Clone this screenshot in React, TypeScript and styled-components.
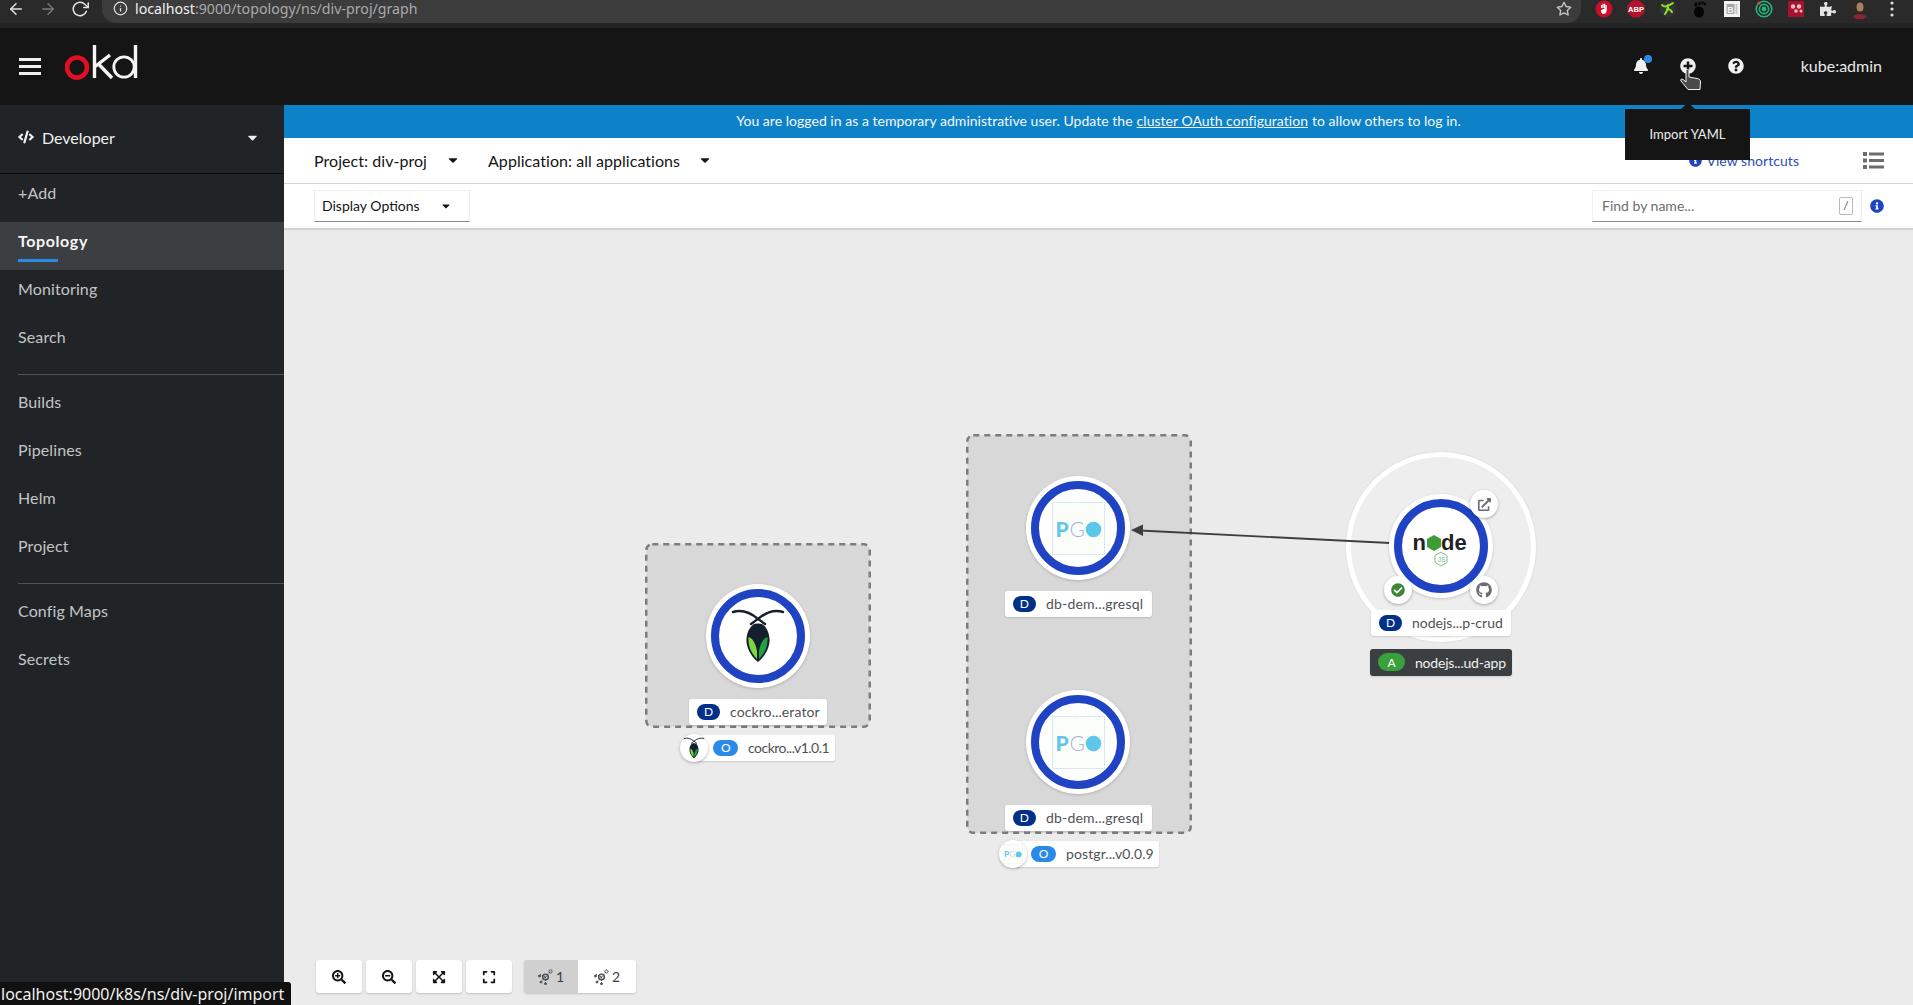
import React from "react";
import styled, { createGlobalStyle } from "styled-components";
import {
  FaBell,
  FaCaretDown,
  FaCheckCircle,
  FaCode,
  FaExpand,
  FaExpandArrowsAlt,
  FaExternalLinkAlt,
  FaGithub,
  FaInfoCircle,
  FaPlusCircle,
  FaPuzzlePiece,
  FaQuestionCircle,
  FaSearchMinus,
  FaSearchPlus,
} from "react-icons/fa";
import { FiArrowLeft, FiArrowRight, FiInfo, FiRotateCw, FiStar } from "react-icons/fi";

const GlobalStyle = createGlobalStyle`
  html, body {
    margin: 0;
    padding: 0;
    height: 100%;
    overflow: hidden;
    font-family: "Lato", "Liberation Sans", sans-serif;
    background: #151515;
  }
  * { box-sizing: border-box; }
`;

const Page = styled.div`
  position: relative;
  display: flex;
  flex-direction: column;
  width: 1913px;
  height: 1005px;
  overflow: hidden;
`;

/* browser chrome */
const BrowserBar = styled.div`
  display: flex;
  align-items: flex-start;
  height: 28px;
  flex: none;
  background: #2a2a2a;
  border-bottom: 5px solid #242424;
  color: #e8e8e8;
`;

const ChromeButton = styled.div<{ $dim?: boolean }>`
  display: flex;
  justify-content: center;
  align-items: center;
  width: 32px;
  height: 18px;
  font-size: 18px;
  color: ${(p) => (p.$dim ? "#77797b" : "#e2e2e2")};
`;

const UrlPill = styled.div`
  display: flex;
  align-items: center;
  width: 1479px;
  height: 23px;
  margin-left: 6px;
  padding: 0 9px 6px 11px;
  background: #3c3c3c;
  border-radius: 0 0 14px 14px;
  font-family: "Noto Sans", sans-serif;
  font-size: 14.2px;
  color: #a8aaab;
  svg { flex: none; }
`;

const UrlText = styled.span`
  margin-left: 7px;
  b { font-weight: 400; color: #f0f0f0; }
`;

const StarSlot = styled.span`
  display: flex;
  margin-left: auto;
  font-size: 16px;
  color: #c8c8c8;
`;

const Extensions = styled.div`
  display: flex;
  align-items: center;
  gap: 12px;
  height: 18px;
  margin-left: 13px;
`;

const Ext = styled.span`
  display: flex;
  justify-content: center;
  align-items: center;
  width: 20px;
  height: 20px;
  font-size: 16px;
  color: #e4e4e4;
`;

/* masthead */
const Masthead = styled.header`
  display: flex;
  align-items: center;
  height: 77px;
  flex: none;
  padding-left: 19px;
  background: #151515;
  color: #f0f0f0;
`;

const Hamburger = styled.div`
  display: flex;
  flex-direction: column;
  justify-content: space-between;
  width: 22px;
  height: 17px;
  span {
    height: 3px;
    background: #f0f0f0;
  }
`;

const LogoSlot = styled.div`
  display: flex;
  margin: -7px 0 0 24px;
`;

const MastActions = styled.div`
  display: flex;
  align-items: center;
  margin-left: auto;
  padding: 0 31px 2px 0;
  font-size: 16px;
`;

const MastIcon = styled.span`
  position: relative;
  display: flex;
  justify-content: center;
  width: 48px;
  font-size: 16px;
  &:first-child { margin-right: -1px; }
`;

const BellDot = styled.span`
  position: absolute;
  top: -3px;
  left: 27px;
  width: 8px;
  height: 8px;
  border-radius: 50%;
  background: #2b8ae8;
`;

const UserName = styled.span`
  margin-left: 41px;
  font-size: 16px;
  color: #e8e8e8;
`;

/* sidebar and main */
const Body = styled.div`
  display: flex;
  flex: 1;
  min-height: 0;
`;

const Sidebar = styled.nav`
  width: 284px;
  flex: none;
  background: #212427;
`;

const PerspectiveBar = styled.div`
  display: flex;
  align-items: center;
  gap: 8px;
  height: 69px;
  padding: 0 24px 4px 18px;
  border-bottom: 1px solid #0b0b0b;
  font-size: 16px;
  color: #f0f0f0;
  svg:last-child { margin-left: auto; }
`;

const NavItem = styled.div<{ $active?: boolean }>`
  position: relative;
  display: flex;
  align-items: center;
  height: 48px;
  padding: 0 0 12px 18px;
  font-size: 16px;
  letter-spacing: ${(p) => (p.$active ? "0.6px" : "0.12px")};
  font-weight: ${(p) => (p.$active ? 700 : 400)};
  color: ${(p) => (p.$active ? "#f5f5f5" : "#c2c4c6")};
  background: ${(p) => (p.$active ? "#3c3f42" : "transparent")};
`;

const NavUnderline = styled.span`
  position: absolute;
  left: 18px;
  bottom: 8px;
  width: 40px;
  height: 3px;
  background: #2b8ae8;
`;

const NavDivider = styled.div<{ $before: number; $after: number }>`
  height: 1px;
  margin: ${(p) => p.$before}px 0 ${(p) => p.$after}px 18px;
  background: #4f5255;
`;

const Main = styled.main`
  display: flex;
  flex-direction: column;
  flex: 1;
  min-width: 0;
`;

const Banner = styled.div`
  display: flex;
  justify-content: center;
  align-items: center;
  height: 33px;
  flex: none;
  padding-bottom: 2px;
  background: #0d82c8;
  font-size: 14px;
  letter-spacing: 0.03px;
  color: #f4f8fb;
  a {
    margin: 0 4px;
    color: inherit;
    text-decoration: underline;
  }
`;

const ProjectBar = styled.div`
  display: flex;
  align-items: center;
  height: 46px;
  flex: none;
  padding: 0 29px 1px 30px;
  background: #fff;
  border-bottom: 1px solid #d2d2d2;
  font-size: 16px;
  letter-spacing: 0.05px;
  color: #151515;
`;

const Picker = styled.div<{ $gap: number }>`
  display: flex;
  align-items: center;
  gap: ${(p) => p.$gap}px;
  margin-right: 28px;
  svg { font-size: 14px; }
`;

const ShortcutLink = styled.span`
  display: flex;
  align-items: center;
  gap: 4px;
  margin-left: auto;
  font-size: 14px;
  color: #2b50b4;
  svg { font-size: 13px; color: #1e44c0; }
`;

const ListToggle = styled.svg`
  margin-left: 64px;
`;

const FilterBar = styled.div`
  display: flex;
  align-items: center;
  height: 46px;
  flex: none;
  padding: 0 29px 0 30px;
  background: #fff;
  border-bottom: 2px solid #d2d2d2;
  font-size: 14px;
`;

const DisplaySelect = styled.div`
  display: flex;
  align-items: center;
  justify-content: space-between;
  width: 156px;
  height: 32px;
  padding: 0 17px 1px 7px;
  border: 1px solid #f0f0f0;
  border-bottom-color: #8a8d90;
  color: #151515;
  svg { font-size: 12px; }
`;

const FindInput = styled.div`
  display: flex;
  align-items: center;
  justify-content: space-between;
  width: 270px;
  height: 32px;
  margin-left: auto;
  padding: 0 8px 1px 9px;
  border: 1px solid #f0f0f0;
  border-bottom-color: #8a8d90;
  color: #6a6e73;
`;

const SlashKey = styled.span`
  display: flex;
  justify-content: center;
  align-items: center;
  width: 14px;
  height: 18px;
  border: 1px solid #b8bbbe;
  border-radius: 2px;
  font-size: 12px;
  color: #4f5255;
`;

const FilterInfo = styled.span`
  display: flex;
  margin-left: 8px;
  font-size: 14px;
  color: #1e44c0;
`;

/* topology canvas */
const Canvas = styled.div`
  position: relative;
  flex: 1;
  background: #ebebeb;
`;

const EdgeLayer = styled.svg`
  position: absolute;
  inset: 0;
  width: 100%;
  height: 100%;
  z-index: 2;
`;

const GroupFrame = styled.svg<{ $x: number; $y: number }>`
  position: absolute;
  left: ${(p) => p.$x}px;
  top: ${(p) => p.$y}px;
`;

const AppHalo = styled.div<{ $x: number; $y: number }>`
  position: absolute;
  left: ${(p) => p.$x - 95}px;
  top: ${(p) => p.$y - 95}px;
  width: 190px;
  height: 190px;
  background: #eeeeee;
  border: 5px solid #fff;
  border-radius: 50%;
  box-shadow: 0 0 2px rgba(0, 0, 0, 0.12);
`;

const NodeDisc = styled.div<{ $x: number; $y: number }>`
  position: absolute;
  left: ${(p) => p.$x - 52}px;
  top: ${(p) => p.$y - 52}px;
  display: flex;
  justify-content: center;
  align-items: center;
  width: 104px;
  height: 104px;
  background: #fff;
  border-radius: 50%;
  box-shadow: 0 1px 3px rgba(0, 0, 0, 0.18);
  z-index: 3;
`;

const NodeRing = styled.div`
  display: flex;
  justify-content: center;
  align-items: center;
  width: 94px;
  height: 94px;
  background: #fff;
  border: 8px solid #2043c4;
  border-radius: 50%;
`;

const Decorator = styled.span<{ $x: number; $y: number; $color?: string }>`
  position: absolute;
  left: ${(p) => p.$x - 14}px;
  top: ${(p) => p.$y - 14}px;
  display: flex;
  justify-content: center;
  align-items: center;
  width: 28px;
  height: 28px;
  background: #fff;
  border-radius: 50%;
  box-shadow: 0 1px 3px rgba(0, 0, 0, 0.3);
  font-size: 15px;
  color: ${(p) => p.$color ?? "#6a6e73"};
  z-index: 4;
`;

const Label = styled.div<{
  $x: number;
  $y: number;
  $w: number;
  $dark?: boolean;
  $pad?: number;
  $track?: number;
}>`
  position: absolute;
  left: ${(p) => p.$x}px;
  top: ${(p) => p.$y}px;
  display: flex;
  align-items: center;
  gap: 10px;
  width: ${(p) => p.$w}px;
  height: ${(p) => (p.$dark ? 27 : 26)}px;
  padding-left: ${(p) => p.$pad ?? 8}px;
  padding-bottom: 1px;
  background: ${(p) => (p.$dark ? "#3c3f42" : "#fff")};
  border-radius: 3px;
  box-shadow: 0 1px 2px rgba(0, 0, 0, 0.14);
  font-size: 14px;
  letter-spacing: ${(p) => p.$track ?? 0.1}px;
  white-space: nowrap;
  color: ${(p) => (p.$dark ? "#f0f0f0" : "#4f5255")};
  z-index: 4;
`;

const KindBadge = styled.span<{ $bg: string; $w?: number; $h?: number }>`
  display: flex;
  justify-content: center;
  align-items: center;
  width: ${(p) => p.$w ?? 23}px;
  height: ${(p) => p.$h ?? 16}px;
  flex: none;
  border-radius: 9px;
  background: ${(p) => p.$bg};
  font-size: 12px;
  color: #fff;
`;

const OperatorIcon = styled.span`
  position: absolute;
  left: -14px;
  top: -1px;
  display: flex;
  justify-content: center;
  align-items: center;
  width: 28px;
  height: 28px;
  background: #fff;
  border-radius: 50%;
  box-shadow: 0 1px 3px rgba(0, 0, 0, 0.28);
`;

const Controls = styled.div`
  position: absolute;
  left: 32px;
  bottom: 12px;
  display: flex;
  align-items: center;
  gap: 4px;
  z-index: 5;
`;

const CtrlButton = styled.div`
  display: flex;
  justify-content: center;
  align-items: center;
  width: 46px;
  height: 33px;
  background: #fff;
  border-radius: 3px;
  box-shadow: 0 1px 2px rgba(0, 0, 0, 0.18);
  font-size: 14px;
  color: #151515;
`;

const LayoutGroup = styled.div`
  display: flex;
  margin-left: 8px;
  border-radius: 3px;
  overflow: hidden;
  box-shadow: 0 1px 2px rgba(0, 0, 0, 0.18);
`;

const LayoutButton = styled.div<{ $on?: boolean }>`
  display: flex;
  justify-content: center;
  align-items: center;
  gap: 3px;
  width: ${(p) => (p.$on ? 54 : 58)}px;
  height: 33px;
  background: ${(p) => (p.$on ? "#d0d0d0" : "#fff")};
  font-size: 14px;
  color: #3c3f42;
`;

/* overlays */
const Tooltip = styled.div`
  position: absolute;
  left: 1625px;
  top: 109px;
  display: flex;
  justify-content: center;
  align-items: center;
  width: 125px;
  height: 51px;
  padding-bottom: 2px;
  background: #151515;
  font-size: 13px;
  color: #ededed;
  z-index: 10;
  &::before {
    content: "";
    position: absolute;
    left: 56px;
    top: -6px;
    border-left: 7px solid transparent;
    border-right: 7px solid transparent;
    border-bottom: 6px solid #151515;
  }
`;

const Cursor = styled.svg`
  position: absolute;
  left: 1680px;
  top: 69px;
  z-index: 11;
`;

const StatusBubble = styled.div`
  position: absolute;
  left: 0;
  bottom: 0;
  width: 291px;
  height: 23px;
  padding: 2px 0 0 1px;
  overflow: hidden;
  background: #111;
  border-top-right-radius: 3px;
  font-family: "Noto Sans", sans-serif;
  font-size: 16px;
  line-height: 21px;
  white-space: nowrap;
  color: #f0f0f0;
  z-index: 12;
`;

const OkdLogo = () => (
  <svg width="74" height="36" viewBox="0 0 74 36" fill="none">
    <circle cx="12" cy="22.5" r="10" stroke="#e00f24" strokeWidth="4.6" />
    <path d="M29.5 0v33M29.5 22L45 10M33.5 19L47 33" stroke="#f4f4f4" strokeWidth="3.4" />
    <circle cx="59" cy="22" r="10.2" stroke="#f4f4f4" strokeWidth="2.8" />
    <path d="M70.5 0v33" stroke="#f4f4f4" strokeWidth="3.4" />
  </svg>
);

const Roach = ({ size }: { size: number }) => (
  <svg width={size} height={size} viewBox="0 0 66 66" fill="none">
    <path
      d="M33 59C24 52 21 42 21.5 36 22 27 27 20 33 20s11 7 11.5 16c.5 6-2.5 16-11.5 23z"
      fill="#14202e"
    />
    <path d="M8 9c10-3 18 1 25 7l7 5M58 9c-10-3-18 1-25 7l-7 5" stroke="#14202e" strokeWidth="2.4" strokeLinecap="round" />
    <polygon points="33,17.5 29,20.5 37,20.5" fill="#fff" />
    <path d="M32 56c-6-6-9-13-8.5-22 4.5 1 7.500 8 8.500 14z" fill="#7fd63f" />
    <path d="M34 56c6-6 9-13 8.500-22-4.500 1-7.500 8-8.500 14z" fill="#1fa33f" />
  </svg>
);

const PgoLogo = ({ size }: { size: number }) => (
  <svg width={size} height={size} viewBox="0 0 53 53">
    <rect x="0.5" y="0.5" width="52" height="52" fill="#fbfdf8" stroke="#c5def3" strokeDasharray="2 1" />
    <text x="3.5" y="35" fontFamily="Lato, sans-serif" fontWeight="900" fontSize="21" fill="#63c4ec">P</text>
    <text x="17.5" y="35" fontFamily="Lato, sans-serif" fontWeight="300" fontSize="21" fill="#a8b4de">G</text>
    <circle cx="41.5" cy="27.5" r="7.8" fill="#5cc7ea" />
  </svg>
);

const NodeLogo = () => (
  <svg width="56" height="44" viewBox="0 0 56 44">
    <text x="-0.5" y="26" fontFamily="Liberation Sans, sans-serif" fontWeight="700" fontSize="22" fill="#222">n</text>
    <polygon points="21,11 28,15 28,23 21,27 14,23 14,15" fill="#3f9c35" />
    <text x="28" y="26" fontFamily="Liberation Sans, sans-serif" fontWeight="700" fontSize="22" fill="#222">d</text>
    <text x="41.5" y="26" fontFamily="Liberation Sans, sans-serif" fontWeight="700" fontSize="22" fill="#222">e</text>
    <polygon points="28,28 34,31.5 34,38.5 28,42 22,38.5 22,31.5" fill="none" stroke="#7dbd86" strokeWidth="1" />
    <text x="24.5" y="38" fontFamily="Liberation Sans, sans-serif" fontSize="7" fill="#7dbd86">JS</text>
  </svg>
);

const TopologyGlyph = () => (
  <svg width="15" height="16" viewBox="0 0 15 16" fill="none" stroke="#4f5255" strokeWidth="1">
    <circle cx="7.5" cy="8" r="2.8" strokeWidth="1.5" />
    <path d="M7.5 8L12 3M7.5 8L2 5.5M7.5 8L3 13M7.5 8V15" strokeDasharray="1.5 1" />
    <circle cx="12.5" cy="2.5" r="1.6" />
    <circle cx="1.5" cy="7" r="1" fill="#4f5255" />
    <circle cx="3" cy="13" r="1" fill="#4f5255" />
    <circle cx="7.5" cy="14.8" r="1" fill="#4f5255" />
  </svg>
);

const extensionIcons = [
  <svg key="ublock" width="18" height="18" viewBox="0 0 18 18">
    <circle cx="9" cy="9" r="8.5" fill="#c8102e" />
    <path d="M6 8V5h1.2v3M7.500 8V3.800h1.200V8M9 8V3.800h1.200V8M10.500 8V5h1.200v5.500C11.500 13 10 14 8.500 14 6.500 14 6 12 6 10z" fill="#fff" />
  </svg>,
  <svg key="abp" width="18" height="18" viewBox="0 0 18 18">
    <polygon points="5.5,0.5 12.5,0.5 17.5,5.5 17.5,12.5 12.5,17.5 5.5,17.5 0.5,12.5 0.5,5.5" fill="#b3122a" />
    <text x="9" y="12" textAnchor="middle" fontFamily="Liberation Sans, sans-serif" fontWeight="700" fontSize="7.6" fill="#fff">ABP</text>
  </svg>,
  <svg key="gecko" width="18" height="18" viewBox="0 0 18 18" fill="none">
    <circle cx="9" cy="9" r="8" fill="#343434" />
    <path d="M3 5c3 3 6 1 11-2M9 5c1 3-1 6-3 9M8 9c2 0 4 1 5 3" stroke="#8be02b" strokeWidth="2" strokeLinecap="round" />
  </svg>,
  <svg key="gnome" width="18" height="18" viewBox="0 0 18 18" fill="#050505">
    <ellipse cx="8" cy="12" rx="5" ry="5.5" />
    <ellipse cx="5" cy="4.5" rx="1.5" ry="2.3" />
    <ellipse cx="8.5" cy="3.5" rx="1.3" ry="2" />
    <ellipse cx="11.5" cy="3" rx="1.2" ry="1.8" />
    <ellipse cx="14" cy="4" rx="1" ry="1.4" />
  </svg>,
  <svg key="bold" width="16" height="16" viewBox="0 0 16 16">
    <rect width="16" height="16" fill="#f2f2f2" />
    <rect x="2.5" y="3" width="8" height="10" fill="#a6a6a6" />
    <rect x="11.5" y="3" width="2" height="10" fill="#c8c8c8" />
    <text x="6.5" y="11.5" textAnchor="middle" fontFamily="Liberation Sans, sans-serif" fontWeight="700" fontSize="9" fill="#f2f2f2">B</text>
  </svg>,
  <svg key="radar" width="18" height="18" viewBox="0 0 18 18" fill="none" stroke="#23b37c" strokeWidth="1.6">
    <circle cx="9" cy="9" r="7.8" />
    <circle cx="9" cy="9" r="4.6" />
    <circle cx="9" cy="9" r="1.6" fill="#23b37c" />
    <circle cx="4" cy="3" r="1.6" fill="#d0523a" stroke="none" />
  </svg>,
  <svg key="redsq" width="16" height="16" viewBox="0 0 16 16">
    <rect width="16" height="16" fill="#a8122f" />
    <circle cx="5" cy="5.5" r="2.2" fill="#e7bcc5" />
    <circle cx="11" cy="5.5" r="2.2" fill="#e7bcc5" />
    <circle cx="13" cy="10" r="1.5" fill="#e7bcc5" />
    <circle cx="8" cy="10" r="1.8" fill="#e7bcc5" />
  </svg>,
  <FaPuzzlePiece key="puzzle" />,
  <svg key="avatar" width="20" height="20" viewBox="0 0 20 20">
    <circle cx="10" cy="10" r="10" fill="#2c2a24" />
    <ellipse cx="10" cy="8" rx="3.5" ry="4.5" fill="#a87f66" />
    <path d="M3 18c2-4 11-4 14 0l-4 2H6z" fill="#8c2333" />
  </svg>,
  <svg key="dots" width="4" height="16" viewBox="0 0 4 16" fill="#dcdcdc">
    <circle cx="2" cy="2" r="1.6" />
    <circle cx="2" cy="8" r="1.6" />
    <circle cx="2" cy="14" r="1.6" />
  </svg>,
];

const navTop = ["Monitoring", "Search"];
const navMid = ["Builds", "Pipelines", "Helm", "Project"];
const navBottom = ["Config Maps", "Secrets"];

const Group = ({ x, y, w, h }: { x: number; y: number; w: number; h: number }) => (
  <GroupFrame $x={x} $y={y} width={w} height={h}>
    <rect
      x="1.25"
      y="1.25"
      width={w - 2.5}
      height={h - 2.5}
      rx="6"
      fill="#d8d8d8"
      stroke="#7a7c7e"
      strokeWidth="2.5"
      strokeDasharray="6 5"
    />
  </GroupFrame>
);

const App = () => {
  return (
    <Page>
      <GlobalStyle />
      <BrowserBar>
        <ChromeButton>
          <FiArrowLeft />
        </ChromeButton>
        <ChromeButton $dim>
          <FiArrowRight />
        </ChromeButton>
        <ChromeButton>
          <FiRotateCw />
        </ChromeButton>
        <UrlPill>
          <FiInfo size={15} color="#e0e0e0" />
          <UrlText>
            <b>localhost</b>:9000/topology/ns/div-proj/graph
          </UrlText>
          <StarSlot>
            <FiStar />
          </StarSlot>
        </UrlPill>
        <Extensions>
          {extensionIcons.map((icon) => (
            <Ext key={icon.key}>{icon}</Ext>
          ))}
        </Extensions>
      </BrowserBar>

      <Masthead>
        <Hamburger>
          <span />
          <span />
          <span />
        </Hamburger>
        <LogoSlot>
          <OkdLogo />
        </LogoSlot>
        <MastActions>
          <MastIcon>
            <FaBell />
            <BellDot />
          </MastIcon>
          <MastIcon>
            <FaPlusCircle />
          </MastIcon>
          <MastIcon>
            <FaQuestionCircle />
          </MastIcon>
          <UserName>kube:admin</UserName>
        </MastActions>
      </Masthead>

      <Body>
        <Sidebar>
          <PerspectiveBar>
            <FaCode size={16} />
            Developer
            <FaCaretDown size={15} />
          </PerspectiveBar>
          <NavItem>+Add</NavItem>
          <NavItem $active>
            Topology
            <NavUnderline />
          </NavItem>
          {navTop.map((n) => (
            <NavItem key={n}>{n}</NavItem>
          ))}
          <NavDivider $before={8} $after={8} />
          {navMid.map((n) => (
            <NavItem key={n}>{n}</NavItem>
          ))}
          <NavDivider $before={8} $after={8} />
          {navBottom.map((n) => (
            <NavItem key={n}>{n}</NavItem>
          ))}
        </Sidebar>

        <Main>
          <Banner>
            You are logged in as a temporary administrative user. Update the
            <a>cluster OAuth configuration</a>
            to allow others to log in.
          </Banner>
          <ProjectBar>
            <Picker $gap={19}>
              Project: div-proj
              <FaCaretDown />
            </Picker>
            <Picker $gap={18}>
              Application: all applications
              <FaCaretDown />
            </Picker>
            <ShortcutLink>
              <FaInfoCircle />
              View shortcuts
            </ShortcutLink>
            <ListToggle width="21" height="17" viewBox="0 0 21 17" fill="#6a6e73">
              <rect width="4" height="4" />
              <rect y="6.5" width="4" height="4" />
              <rect y="13" width="4" height="4" />
              <rect x="6" y="0.5" width="15" height="3" />
              <rect x="6" y="7" width="15" height="3" />
              <rect x="6" y="13.5" width="15" height="3" />
            </ListToggle>
          </ProjectBar>
          <FilterBar>
            <DisplaySelect>
              Display Options
              <FaCaretDown />
            </DisplaySelect>
            <FindInput>
              Find by name...
              <SlashKey>/</SlashKey>
            </FindInput>
            <FilterInfo>
              <FaInfoCircle />
            </FilterInfo>
          </FilterBar>

          <Canvas>
            <Group x={361} y={313} w={226} h={185} />
            <Group x={682} y={204} w={226} h={400} />
            <AppHalo $x={1157} $y={317} />

            <NodeDisc $x={474} $y={406}>
              <NodeRing>
                <Roach size={66} />
              </NodeRing>
            </NodeDisc>
            <NodeDisc $x={794} $y={298}>
              <NodeRing>
                <PgoLogo size={53} />
              </NodeRing>
            </NodeDisc>
            <NodeDisc $x={794} $y={512}>
              <NodeRing>
                <PgoLogo size={53} />
              </NodeRing>
            </NodeDisc>
            <NodeDisc $x={1157} $y={316}>
              <NodeRing>
                <NodeLogo />
              </NodeRing>
            </NodeDisc>

            <EdgeLayer>
              <line x1="1106" y1="313" x2="856" y2="300.5" stroke="#3c3f42" strokeWidth="1.8" />
              <polygon points="847,300 859,294.5 859,306" fill="#3c3f42" />
            </EdgeLayer>

            <Decorator $x={1200} $y={274}>
              <FaExternalLinkAlt size={13} />
            </Decorator>
            <Decorator $x={1114} $y={360} $color="#3e8635">
              <FaCheckCircle size={14} />
            </Decorator>
            <Decorator $x={1200} $y={360}>
              <FaGithub size={16} />
            </Decorator>

            <Label $x={405} $y={469} $w={138}>
              <KindBadge $bg="#003087">D</KindBadge>
              cockro...erator
            </Label>
            <Label $x={721} $y={361} $w={147} $track={0.2}>
              <KindBadge $bg="#003087">D</KindBadge>
              db-dem...gresql
            </Label>
            <Label $x={721} $y={575} $w={147} $track={0.2}>
              <KindBadge $bg="#003087">D</KindBadge>
              db-dem...gresql
            </Label>
            <Label $x={1087} $y={380} $w={140} $track={0}>
              <KindBadge $bg="#003087">D</KindBadge>
              nodejs...p-crud
            </Label>
            <Label $x={1086} $y={419} $w={142} $dark $track={-0.2}>
              <KindBadge $bg="#38a13c" $w={27} $h={18}>
                A
              </KindBadge>
              nodejs...ud-app
            </Label>
            <Label $x={410} $y={505} $w={141} $pad={19} $track={-0.5}>
              <OperatorIcon>
                <Roach size={26} />
              </OperatorIcon>
              <KindBadge $bg="#2b8ae8" $w={25}>
                O
              </KindBadge>
              cockro...v1.0.1
            </Label>
            <Label $x={729} $y={611} $w={146} $pad={18}>
              <OperatorIcon>
                <PgoLogo size={20} />
              </OperatorIcon>
              <KindBadge $bg="#2b8ae8" $w={25}>
                O
              </KindBadge>
              postgr...v0.0.9
            </Label>

            <Controls>
              <CtrlButton>
                <FaSearchPlus />
              </CtrlButton>
              <CtrlButton>
                <FaSearchMinus />
              </CtrlButton>
              <CtrlButton>
                <FaExpandArrowsAlt />
              </CtrlButton>
              <CtrlButton>
                <FaExpand />
              </CtrlButton>
              <LayoutGroup>
                <LayoutButton $on>
                  <TopologyGlyph />1
                </LayoutButton>
                <LayoutButton>
                  <TopologyGlyph />2
                </LayoutButton>
              </LayoutGroup>
            </Controls>
          </Canvas>
        </Main>
      </Body>

      <Tooltip>Import YAML</Tooltip>
      <Cursor width="22" height="21" viewBox="0 0 22 21">
        <path
          d="M6 1.5c0-1.5 3-1.500 3 0V8l8 1.5c2.500.5 3.500 1.500 3.500 3.500l-.5 7.500H8L1 12c-1-1.500.5-2.500 2-1.500L6 13z"
          fill="#4a4a4a"
          stroke="#f2f2f2"
          strokeWidth="1"
        />
      </Cursor>
      <StatusBubble>localhost:9000/k8s/ns/div-proj/import</StatusBubble>
    </Page>
  );
};

export default App;
